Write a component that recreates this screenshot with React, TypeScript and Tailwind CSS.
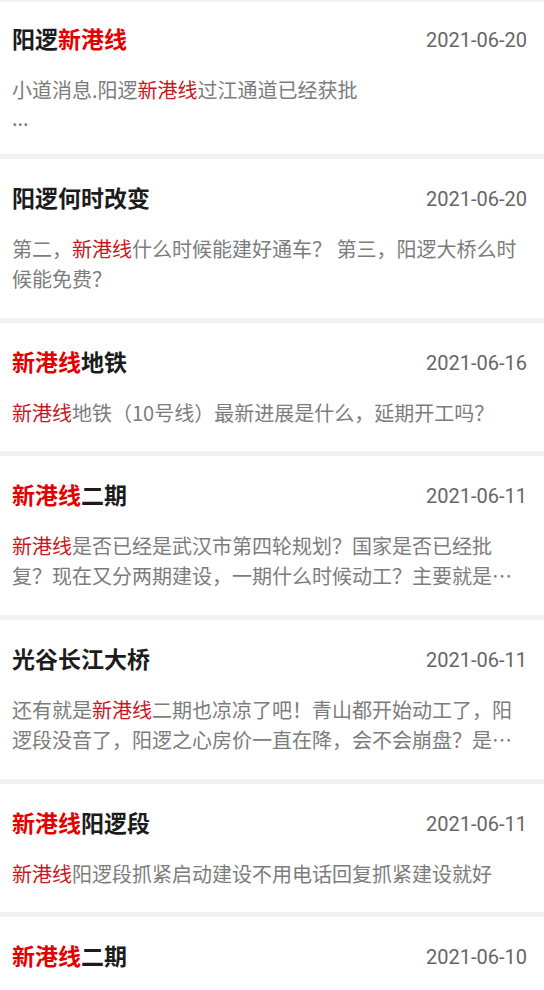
import React from "react";

type Seg = { t: string; red?: boolean };
type Item = { title: Seg[]; date: string; desc: Seg[][]; first?: boolean; tall?: boolean };

const R = "新港线";

const items: Item[] = [
  {
    title: [{ t: "阳逻" }, { t: R, red: true }],
    date: "2021-06-20",
    desc: [[{ t: "小道消息.阳逻" }, { t: R, red: true }, { t: "过江通道已经获批" }], [{ t: "..." }]],
    first: true,
  },
  {
    title: [{ t: "阳逻何时改变" }],
    date: "2021-06-20",
    desc: [[{ t: "第二，" }, { t: R, red: true }, { t: "什么时候能建好通车？ 第三，阳逻大桥么时候能免费？" }]],
    tall: true,
  },
  {
    title: [{ t: R, red: true }, { t: "地铁" }],
    date: "2021-06-16",
    desc: [[{ t: R, red: true }, { t: "地铁（10号线）最新进展是什么，延期开工吗？" }]],
  },
  {
    title: [{ t: R, red: true }, { t: "二期" }],
    date: "2021-06-11",
    desc: [[{ t: R, red: true }, { t: "是否已经是武汉市第四轮规划？国家是否已经批复？现在又分两期建设，一期什么时候动工？主要就是想知道具体的时间安排" }]],
    tall: true,
  },
  {
    title: [{ t: "光谷长江大桥" }],
    date: "2021-06-11",
    desc: [[{ t: "还有就是" }, { t: R, red: true }, { t: "二期也凉凉了吧！青山都开始动工了，阳逻段没音了，阳逻之心房价一直在降，会不会崩盘？是不是要等很久" }]],
    tall: true,
  },
  {
    title: [{ t: R, red: true }, { t: "阳逻段" }],
    date: "2021-06-11",
    desc: [[{ t: R, red: true }, { t: "阳逻段抓紧启动建设不用电话回复抓紧建设就好" }]],
  },
  {
    title: [{ t: R, red: true }, { t: "二期" }],
    date: "2021-06-10",
    desc: [[{ t: R, red: true }, { t: "二期什么时候开工建设？" }]],
  },
];

function Segs({ segs }: { segs: Seg[] }) {
  return (
    <>
      {segs.map((s, i) => (
        <span key={i} className={s.red ? "text-[#c8161d]" : ""}>
          {s.t}
        </span>
      ))}
    </>
  );
}

function Card({ item }: { item: Item }) {
  const pt = item.first ? "pt-[21px]" : "pt-[23px]";
  const pb = item.tall ? "pb-[24px]" : "pb-[23px]";
  return (
    <div className={`bg-white pl-3 pr-[17px] ${pt} ${pb}`}>
      <div className="flex h-8 items-center justify-between pt-[4px]">
        <div className="text-[23px] font-bold leading-8 text-[#1c1c1c]">
          {item.title.map((s, i) => (
            <span key={i} className={s.red ? "text-[#e50000]" : ""}>
              {s.t}
            </span>
          ))}
        </div>
        <div className="pb-[2px] text-[20px] leading-8 text-[#666666]">{item.date}</div>
      </div>
      <div
        className="mt-5 text-[20px] text-[#7c7c7c]"
        style={{ fontFamily: '"Noto Sans CJK SC", Roboto, sans-serif' }}
      >
        {item.desc.length > 1 ? (
          item.desc.map((line, li) => (
            <div key={li} className={li === 0 ? "h-[30px] leading-[30px]" : "h-[26px] leading-[26px]"}>
              <Segs segs={line} />
            </div>
          ))
        ) : (
          <div className="line-clamp-2 leading-[30px]">
            <Segs segs={item.desc[0]} />
          </div>
        )}
      </div>
    </div>
  );
}

export default function App() {
  return (
    <div
      className="min-h-[990px] w-full bg-[#f2f2f2]"
      style={{ fontFamily: 'Roboto, "Noto Sans CJK SC", sans-serif' }}
    >
      <div className="flex flex-col gap-[5px] pt-[2px]">
        {items.map((it, i) => (
          <Card key={i} item={it} />
        ))}
      </div>
    </div>
  );
}
